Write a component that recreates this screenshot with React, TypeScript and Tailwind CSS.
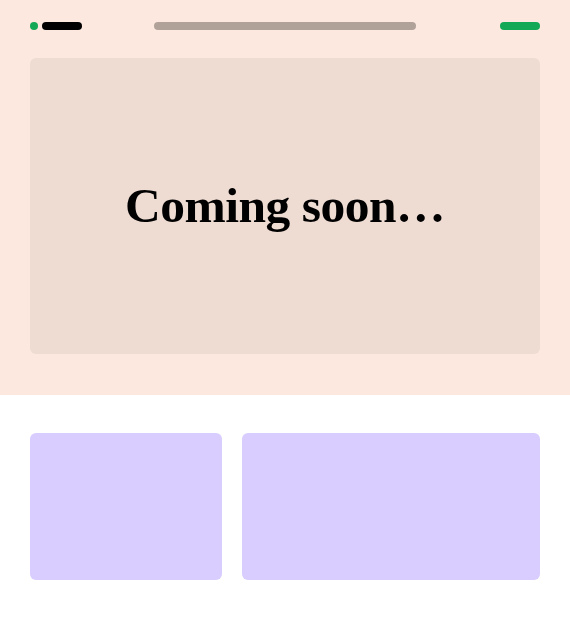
import React from 'react';

const App: React.FC = () => {
  return (
    <div className="min-h-screen bg-white">
      <section className="bg-[#fce8df] px-[30px] pt-[22px] pb-[41px]">
        <nav className="grid grid-cols-[1fr_auto_1fr] items-center h-2">
          <div className="flex items-center gap-1">
            <span className="w-2 h-2 rounded-full bg-[#12a856]" />
            <span className="w-10 h-2 rounded-full bg-black" />
          </div>
          <span className="w-[262px] h-2 rounded-full bg-[#b0a199]" />
          <div className="flex justify-end">
            <span className="w-10 h-2 rounded-full bg-[#12a856]" />
          </div>
        </nav>

        <div className="mt-[28px] h-[296px] rounded-md bg-[#eedbd2] flex items-center justify-center">
          <h1
            className="text-[49.5px] font-bold text-black tracking-[-0.5px] leading-none"
            style={{ fontFamily: '"Liberation Serif", "DejaVu Serif", serif' }}
          >
            Coming soon…
          </h1>
        </div>
      </section>

      <section className="px-[30px] pt-[38px] pb-9">
        <div className="grid grid-cols-[192px_1fr] gap-5">
          <div className="h-[147px] rounded-md bg-[#d8cdfe]" />
          <div className="h-[147px] rounded-md bg-[#d8cdfe]" />
        </div>
      </section>
    </div>
  );
};

export default App;
